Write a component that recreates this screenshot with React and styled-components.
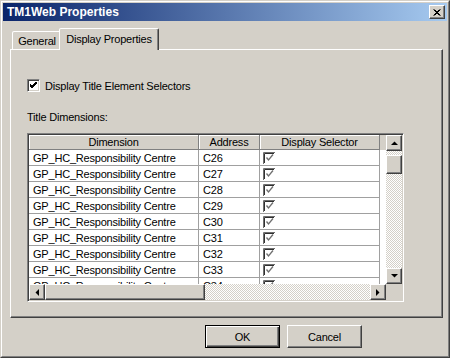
import React from "react";
import styled, { createGlobalStyle, css } from "styled-components";

const Global = createGlobalStyle`
  html, body { margin: 0; padding: 0; background: #d4d0c8; }
  body { font-family: "Liberation Sans", Arial, sans-serif; font-size: 11px; letter-spacing: -0.2px; color: #000; }
`;

const raised = css`
  border-style: solid;
  border-width: 1px;
  border-color: #fff #404040 #404040 #fff;
  box-shadow: inset -1px -1px 0 #808080, inset 1px 1px 0 #d4d0c8;
`;

const Frame = styled.div`
  width: 450px;
  height: 358px;
  box-sizing: border-box;
  border: 1px solid;
  border-color: #d4d0c8 #404040 #404040 #d4d0c8;
  background: #d4d0c8;
`;

const FrameInner = styled.div`
  height: 100%;
  box-sizing: border-box;
  border: 1px solid;
  border-color: #fff #808080 #808080 #fff;
  padding: 1px;
  display: flex;
  flex-direction: column;
`;

const TitleBar = styled.div`
  height: 18px;
  flex: none;
  display: flex;
  align-items: center;
  justify-content: space-between;
  padding: 0 2px 0 4px;
  background: linear-gradient(to right, #0a246a, #a6caf0);
  color: #fff;
  font-weight: bold;
  font-size: 12px;
  letter-spacing: 0;
`;

const CloseBtn = styled.div`
  width: 16px;
  height: 14px;
  box-sizing: border-box;
  background: #d4d0c8;
  ${raised};
  display: flex;
  align-items: center;
  justify-content: center;
`;

const Body = styled.div`
  flex: 1;
  display: flex;
  flex-direction: column;
  padding: 7px 4px 7px 7px;
`;

const TabStrip = styled.div`
  height: 21px;
  display: flex;
  align-items: flex-end;
  padding-left: 2px;
  position: relative;
  z-index: 1;
`;

const Tab = styled.div`
  box-sizing: border-box;
  display: flex;
  align-items: center;
  justify-content: center;
  white-space: nowrap;
  background: #d4d0c8;
  border-style: solid;
  border-color: #fff #404040 transparent #fff;
  border-width: 1px 1px 0 1px;
  border-radius: 2px 2px 0 0;
  box-shadow: inset -1px 0 0 #808080;
  ${(p) =>
    p.$selected
      ? css`
          height: 22px;
          margin: 0 0 -1px -2px;
          padding: 0 0 2px;
          width: 100px;
        `
      : css`
          height: 18px;
          width: 49px;
          padding-top: 1px;
          border-right: none;
          box-shadow: none;
        `}
`;

const Panel = styled.div`
  height: 269px;
  box-sizing: border-box;
  border: 1px solid;
  border-color: #fff #404040 #404040 #fff;
  box-shadow: inset -1px -1px 0 #808080;
  padding: 29px 0 0 16px;
  display: flex;
  flex-direction: column;
`;

const CheckRow = styled.label`
  display: flex;
  align-items: center;
  gap: 5px;
  height: 13px;
`;

const Box = styled.span`
  width: 13px;
  height: 13px;
  box-sizing: border-box;
  border: 1px solid;
  border-color: #808080 #fff #fff #808080;
  box-shadow: inset 1px 1px 0 #404040, inset -1px -1px 0 #d4d0c8;
  background: #fff;
  display: flex;
  align-items: center;
  justify-content: center;
`;

const SectionLabel = styled.div`
  margin-top: 19px;
  height: 13px;
  line-height: 13px;
`;

const GridBox = styled.div`
  margin-top: 9px;
  width: 377px;
  height: 169px;
  box-sizing: border-box;
  border: 1px solid;
  border-color: #808080 #fff #fff #808080;
  box-shadow: inset 1px 1px 0 #404040, inset -1px -1px 0 #d4d0c8;
  padding: 1px;
  display: grid;
  grid-template-columns: 357px 16px;
  grid-template-rows: 149px 16px;
`;

const DataArea = styled.div`
  background: #fff;
  overflow: hidden;
`;

const cols = "170px 61px 120px";

const HeaderRow = styled.div`
  display: grid;
  grid-template-columns: ${cols};
  height: 15px;
  background: #d4d0c8;
`;

const HeaderCell = styled.div`
  box-sizing: border-box;
  height: 15px;
  display: flex;
  align-items: center;
  justify-content: center;
  border-right: 1px solid #808080;
  border-bottom: 1px solid #808080;
  box-shadow: inset 1px 1px 0 #fff;
`;

const Row = styled.div`
  display: grid;
  grid-template-columns: ${cols};
  height: 16px;
`;

const Cell = styled.div`
  box-sizing: border-box;
  height: 16px;
  border-right: 1px solid #a0a0a0;
  border-bottom: 1px solid #a0a0a0;
  display: flex;
  align-items: center;
  padding-left: ${(p) => p.$pad || 4}px;
  white-space: nowrap;
  overflow: hidden;
`;

const track = css`
  background-color: #fff;
  background-image: repeating-conic-gradient(#d4d0c8 0 25%, #fff 0 50%);
  background-size: 2px 2px;
`;

const VScroll = styled.div`
  ${track};
  display: flex;
  flex-direction: column;
`;

const HScroll = styled.div`
  ${track};
  display: flex;
`;

const Corner = styled.div`
  background: #d4d0c8;
`;

const ScrollBtn = styled.div`
  width: 16px;
  height: 16px;
  box-sizing: border-box;
  background: #d4d0c8;
  ${raised};
  display: flex;
  align-items: center;
  justify-content: center;
  flex: none;
`;

const Thumb = styled.div`
  box-sizing: border-box;
  background: #d4d0c8;
  ${raised};
  flex: none;
  ${(p) =>
    p.$vertical
      ? css`
          width: 16px;
          height: 19px;
          margin-top: 4px;
        `
      : css`
          height: 16px;
          width: 160px;
        `}
`;

const Spacer = styled.div`
  flex: 1;
`;

const ButtonRow = styled.div`
  display: flex;
  gap: 7px;
  margin-top: 7px;
  padding-left: 195px;
`;

const Button = styled.div`
  width: 75px;
  height: 23px;
  box-sizing: border-box;
  display: flex;
  align-items: center;
  justify-content: center;
  background: #d4d0c8;
  ${(p) =>
    p.$default
      ? css`
          border: 1px solid #000;
          box-shadow: inset 1px 1px 0 #fff, inset -1px -1px 0 #404040, inset -2px -2px 0 #808080;
        `
      : css`
          ${raised};
        `}
`;

const Arrow = ({ dir }) => {
  const pts = {
    up: "0,4 7,4 3.5,0.5",
    down: "0,0 7,0 3.5,3.5",
    left: "4,0 4,7 0.5,3.5",
    right: "0,0 0,7 3.5,3.5",
  }[dir];
  const horiz = dir === "left" || dir === "right";
  return (
    <svg width={horiz ? 4 : 7} height={horiz ? 7 : 4} viewBox={horiz ? "0 0 4 7" : "0 0 7 4"}>
      <polygon points={pts} fill="#000" />
    </svg>
  );
};

const CellCheck = () => (
  <svg width="12" height="12" viewBox="0 0 12 12">
    <path d="M0.5 12V0.5H12" stroke="#707070" fill="none" />
    <path d="M1.5 11V1.5H11" stroke="#303030" fill="none" />
    <path d="M3.5 5.5l2 2.5 4.5-5.5" stroke="#707070" fill="none" strokeWidth="1.3" />
  </svg>
);

const rows = ["C26", "C27", "C28", "C29", "C30", "C31", "C32", "C33", "C34"];

export default function App() {
  return (
    <>
      <Global />
      <Frame>
        <FrameInner>
          <TitleBar>
            <span>TM1Web Properties</span>
            <CloseBtn>
              <svg width="8" height="7" viewBox="0 0 8 7">
                <path d="M0.5 0.5l6 6M6.5 0.5l-6 6M1.5 0.5l6 6M7.5 0.5l-6 6" stroke="#000" strokeWidth="1" />
              </svg>
            </CloseBtn>
          </TitleBar>
          <Body>
            <TabStrip>
              <Tab>General</Tab>
              <Tab $selected>Display Properties</Tab>
            </TabStrip>
            <Panel>
              <CheckRow>
                <Box>
                  <svg width="7" height="7" viewBox="0 0 7 7">
                    <path d="M0 2l2 2 5-5M0 3l2 2 5-5M0 4l2 2 5-5" stroke="#000" fill="none" strokeWidth="1" />
                  </svg>
                </Box>
                Display Title Element Selectors
              </CheckRow>
              <SectionLabel>Title Dimensions:</SectionLabel>
              <GridBox>
                <DataArea>
                  <HeaderRow>
                    <HeaderCell>Dimension</HeaderCell>
                    <HeaderCell>Address</HeaderCell>
                    <HeaderCell>Display Selector</HeaderCell>
                  </HeaderRow>
                  {rows.map((r) => (
                    <Row key={r}>
                      <Cell>GP_HC_Responsibility Centre</Cell>
                      <Cell>{r}</Cell>
                      <Cell $pad={3}>
                        <CellCheck />
                      </Cell>
                    </Row>
                  ))}
                </DataArea>
                <VScroll>
                  <ScrollBtn>
                    <Arrow dir="up" />
                  </ScrollBtn>
                  <Thumb $vertical />
                  <Spacer />
                  <ScrollBtn>
                    <Arrow dir="down" />
                  </ScrollBtn>
                </VScroll>
                <HScroll>
                  <ScrollBtn>
                    <Arrow dir="left" />
                  </ScrollBtn>
                  <Thumb />
                  <Spacer />
                  <ScrollBtn>
                    <Arrow dir="right" />
                  </ScrollBtn>
                </HScroll>
                <Corner />
              </GridBox>
            </Panel>
            <ButtonRow>
              <Button $default>OK</Button>
              <Button>Cancel</Button>
            </ButtonRow>
          </Body>
        </FrameInner>
      </Frame>
    </>
  );
}
